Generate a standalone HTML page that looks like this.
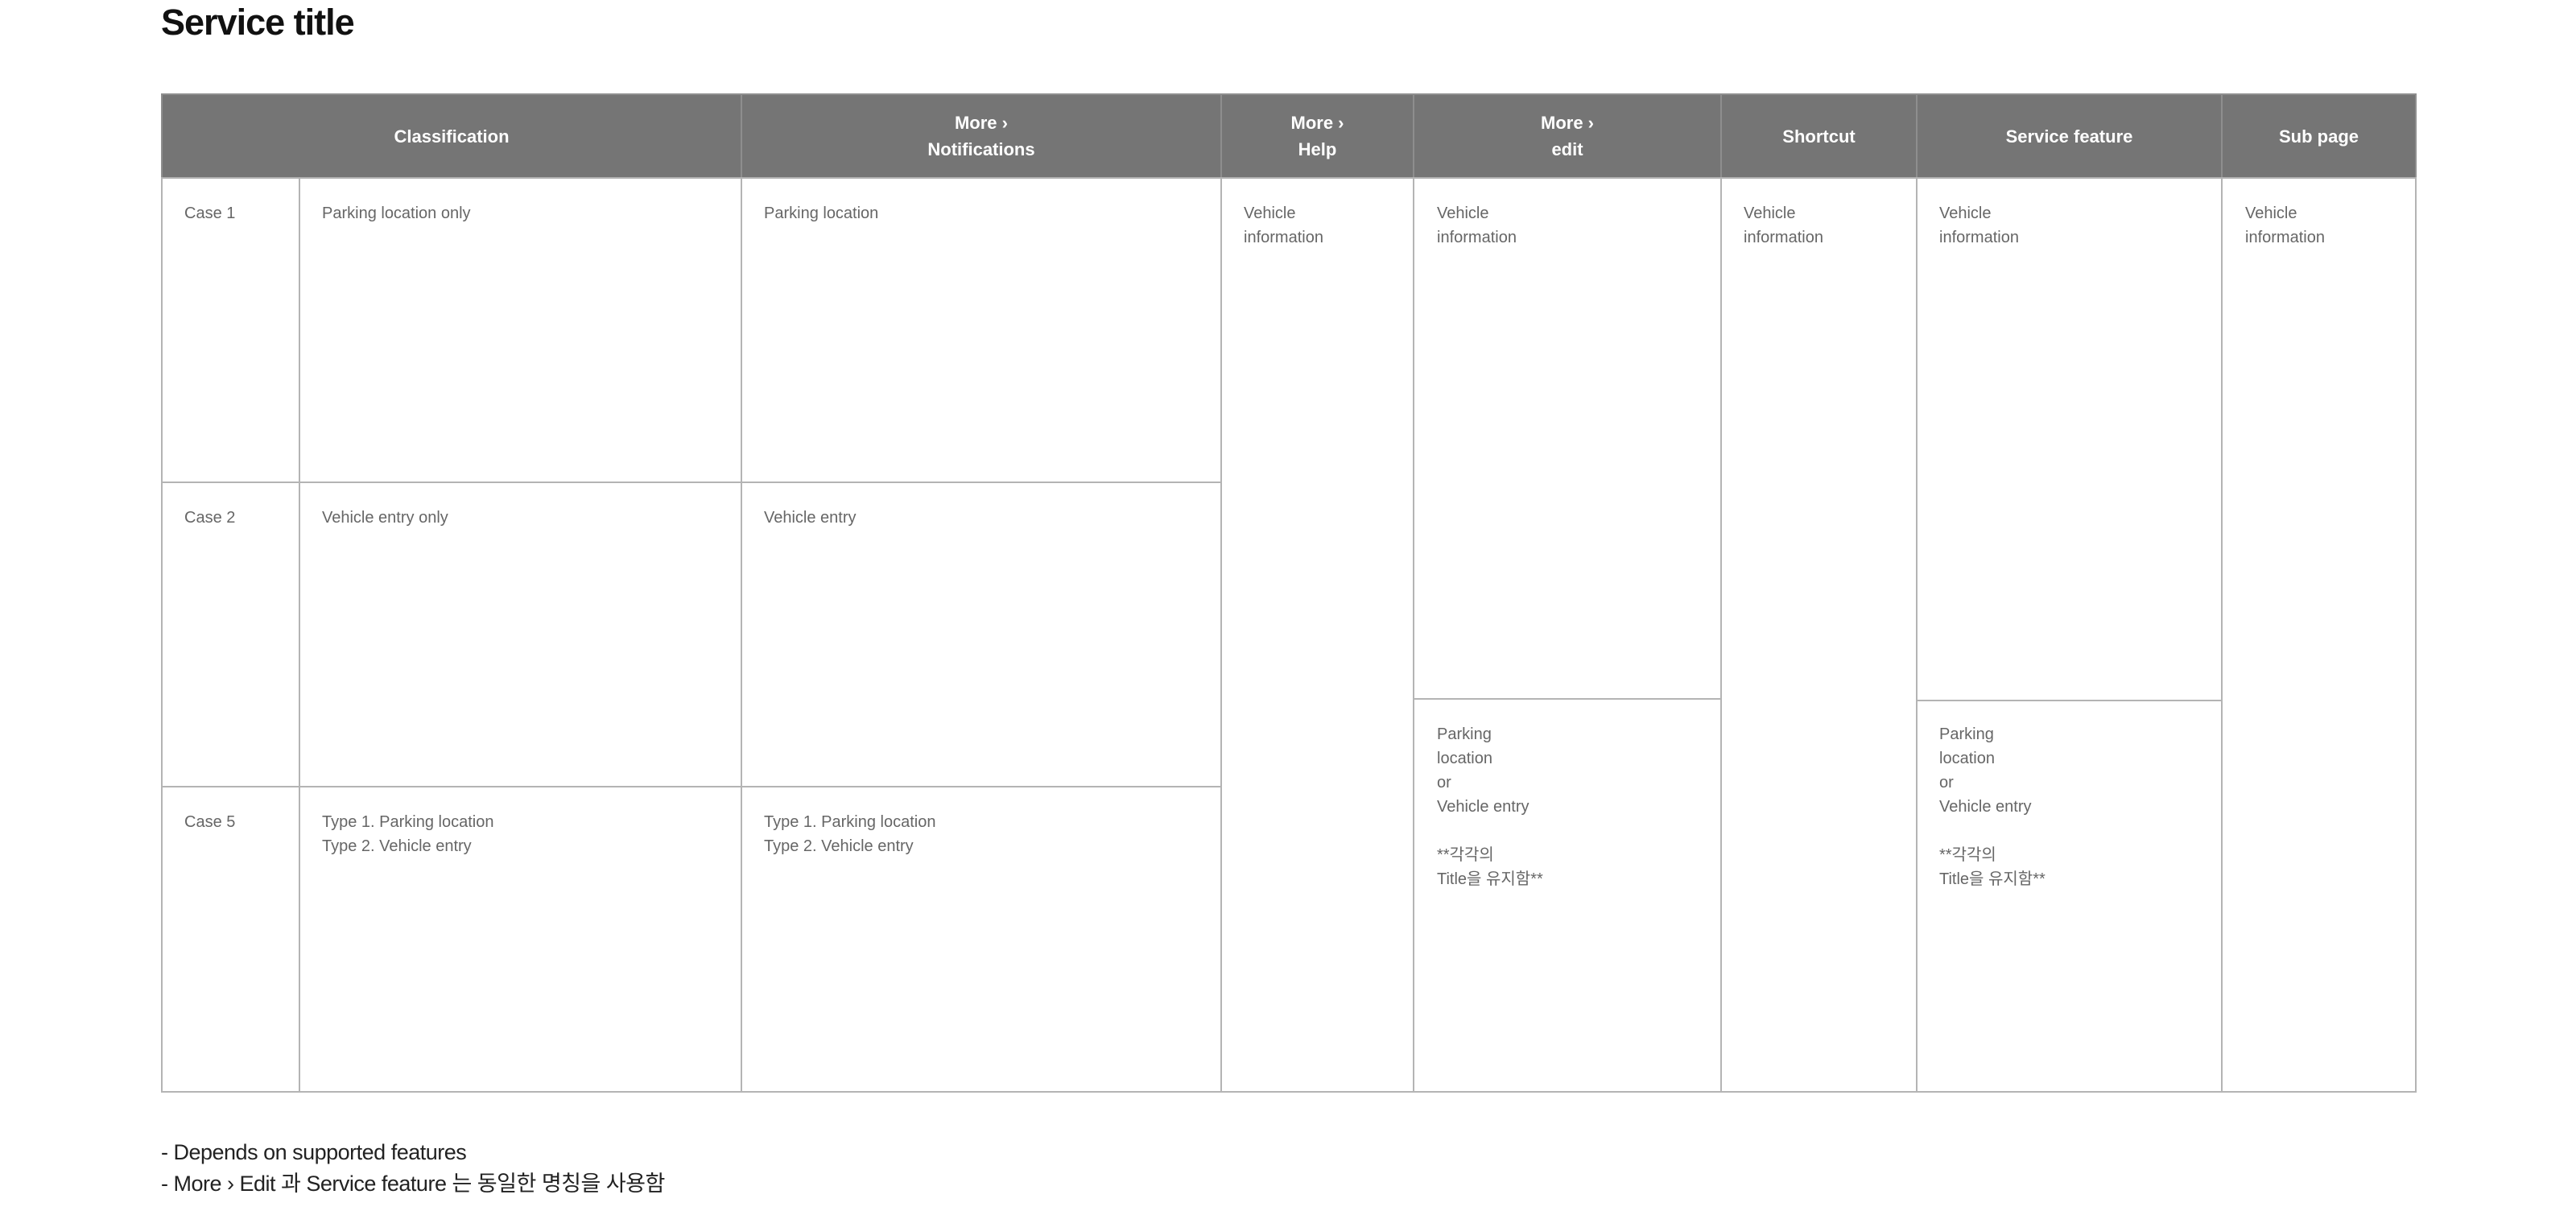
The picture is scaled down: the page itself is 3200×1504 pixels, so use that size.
<!DOCTYPE html>
<html><head><meta charset="utf-8"><style>
body{margin:0;width:3200px;height:1504px;background:#fff;position:relative;overflow:hidden;font-family:"Liberation Sans","Noto Sans CJK KR",sans-serif;}
.c{position:absolute;box-sizing:border-box;border:2px solid #b4b4b4;}
.h{position:absolute;box-sizing:border-box;background:#757575;border:2px solid #8e8e8e;color:#fff;font-size:22px;line-height:33px;display:flex;align-items:center;justify-content:center;text-align:center;font-weight:bold;}
.t{position:absolute;font-size:20px;line-height:30px;color:#666;}
</style></head><body>
<div style="position:absolute;left:200px;top:2px;font-size:45px;font-weight:bold;color:#111;line-height:52px;letter-spacing:-1px">Service title</div>

<div class="h" style="left:200px;top:116px;width:722px;height:106px">Classification</div>
<div class="h" style="left:920px;top:116px;width:598px;height:106px">More ›<br>Notifications</div>
<div class="h" style="left:1516px;top:116px;width:241px;height:106px">More ›<br>Help</div>
<div class="h" style="left:1755px;top:116px;width:384px;height:106px">More ›<br>edit</div>
<div class="h" style="left:2137px;top:116px;width:245px;height:106px">Shortcut</div>
<div class="h" style="left:2380px;top:116px;width:381px;height:106px">Service feature</div>
<div class="h" style="left:2759px;top:116px;width:243px;height:106px">Sub page</div>

<div class="c" style="left:200px;top:220px;width:173px;height:380px"></div>
<div class="c" style="left:371px;top:220px;width:551px;height:380px"></div>
<div class="c" style="left:920px;top:220px;width:598px;height:380px"></div>
<div class="c" style="left:200px;top:598px;width:173px;height:380px"></div>
<div class="c" style="left:371px;top:598px;width:551px;height:380px"></div>
<div class="c" style="left:920px;top:598px;width:598px;height:380px"></div>
<div class="c" style="left:200px;top:976px;width:173px;height:381px"></div>
<div class="c" style="left:371px;top:976px;width:551px;height:381px"></div>
<div class="c" style="left:920px;top:976px;width:598px;height:381px"></div>
<div class="c" style="left:1516px;top:220px;width:241px;height:1137px"></div>
<div class="c" style="left:1755px;top:220px;width:384px;height:649px"></div>
<div class="c" style="left:1755px;top:867px;width:384px;height:490px"></div>
<div class="c" style="left:2137px;top:220px;width:245px;height:1137px"></div>
<div class="c" style="left:2380px;top:220px;width:381px;height:651px"></div>
<div class="c" style="left:2380px;top:869px;width:381px;height:488px"></div>
<div class="c" style="left:2759px;top:220px;width:243px;height:1137px"></div>

<div class="t" style="left:229px;top:250px">Case 1</div>
<div class="t" style="left:400px;top:250px">Parking location only</div>
<div class="t" style="left:949px;top:250px">Parking location</div>
<div class="t" style="left:229px;top:628px">Case 2</div>
<div class="t" style="left:400px;top:628px">Vehicle entry only</div>
<div class="t" style="left:949px;top:628px">Vehicle entry</div>
<div class="t" style="left:229px;top:1006px">Case 5</div>
<div class="t" style="left:400px;top:1006px">Type 1. Parking location<br>Type 2. Vehicle entry</div>
<div class="t" style="left:949px;top:1006px">Type 1. Parking location<br>Type 2. Vehicle entry</div>
<div class="t" style="left:1545px;top:250px">Vehicle<br>information</div>
<div class="t" style="left:1785px;top:250px">Vehicle<br>information</div>
<div class="t" style="left:2166px;top:250px">Vehicle<br>information</div>
<div class="t" style="left:2409px;top:250px">Vehicle<br>information</div>
<div class="t" style="left:2789px;top:250px">Vehicle<br>information</div>
<div class="t" style="left:1785px;top:897px">Parking<br>location<br>or<br>Vehicle entry<br><br>**각각의<br>Title을 유지함**</div>
<div class="t" style="left:2409px;top:897px">Parking<br>location<br>or<br>Vehicle entry<br><br>**각각의<br>Title을 유지함**</div>

<div style="position:absolute;left:200px;top:1412px;font-size:27px;line-height:39px;color:#222;letter-spacing:-0.5px">- Depends on supported features<br>- More › Edit 과 Service feature 는 동일한 명칭을 사용함</div>
</body></html>
